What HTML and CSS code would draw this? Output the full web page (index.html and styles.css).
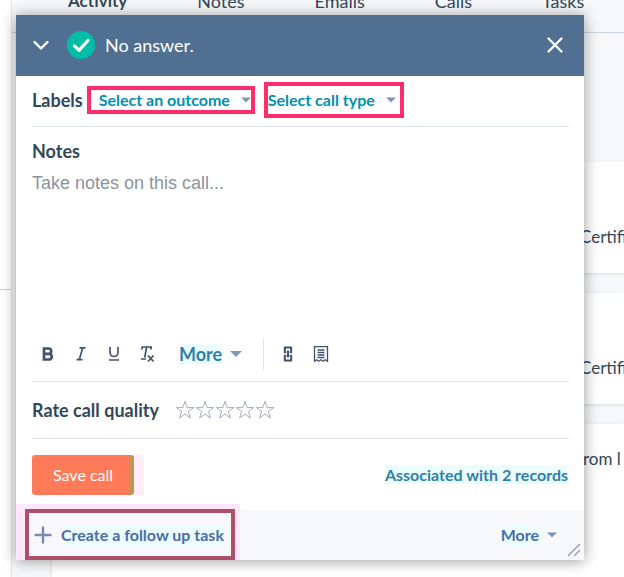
FILE: index.html
```html
<!DOCTYPE html>
<html lang="en">
<head>
    <meta charset="utf-8">
    <title>Log call</title>
    <link rel="stylesheet" href="styles.css">
</head>
<body>
    <div class="page">
        <aside class="sidebar">
            <div class="sidebar-section"></div>
        </aside>
        <main class="record">
            <nav class="tabs">
                <a href="#activity" class="tab active">Activity</a>
                <a href="#notes" class="tab">Notes</a>
                <a href="#emails" class="tab">Emails</a>
                <a href="#calls" class="tab">Calls</a>
                <a href="#tasks" class="tab">Tasks</a>
            </nav>
            <div class="feed">
                <div class="card">Certifi</div>
                <div class="card">Certifi</div>
                <div class="card card-last">from l</div>
            </div>
        </main>
    </div>

    <section class="dialog" role="dialog" aria-labelledby="call-status">
        <header class="dialog-header">
            <button class="icon-button" type="button" aria-label="Minimize">
                <svg width="18" height="18" viewBox="0 0 18 18"><path d="M2.500 6l6.500 6.500 6.500-6.500" fill="none" stroke="#fff" stroke-width="2.400" stroke-linecap="round" stroke-linejoin="round"/></svg>
            </button>
            <svg class="status-icon" width="28" height="28" viewBox="0 0 28 28"><circle cx="14" cy="14" r="14" fill="#00bda5"/><path d="M7.500 15l4.500 4.300 9-9.800" fill="none" stroke="#fff" stroke-width="3.200" stroke-linecap="round" stroke-linejoin="round"/></svg>
            <span class="status" id="call-status">No answer.</span>
            <button class="icon-button" type="button" aria-label="Close">
                <svg width="18" height="18" viewBox="0 0 18 18"><path d="M2.500 2.500l13 13M15.500 2.500l-13 13" fill="none" stroke="#fff" stroke-width="2.300" stroke-linecap="round"/></svg>
            </button>
        </header>

        <form class="dialog-form">
            <div class="labels">
                <span class="heading">Labels</span>
                <label class="picker picker-outcome">
                    <select class="picker-select" aria-label="Call outcome">
                        <option>Select an outcome</option>
                    </select>
                    <svg class="caret" width="10" height="6" viewBox="0 0 10 6"><path d="M0 .5h10L5 5.500z"/></svg>
                </label>
                <label class="picker picker-type">
                    <select class="picker-select" aria-label="Call type">
                        <option>Select call type</option>
                    </select>
                    <svg class="caret" width="10" height="6" viewBox="0 0 10 6"><path d="M0 .5h10L5 5.500z"/></svg>
                </label>
            </div>

            <div class="notes">
                <label class="heading" for="notes">Notes</label>
                <textarea class="notes-input" id="notes" placeholder="Take notes on this call..."></textarea>
                <div class="toolbar">
                    <button class="tool" type="button" aria-label="Bold">
                        <svg width="18" height="18" viewBox="0 0 18 18"><path d="M5 3.500h4.500a2.700 2.700 0 0 1 0 5.400H5zM5 8.900h5a2.800 2.800 0 0 1 0 5.600H5z" stroke-width="2.700"/></svg>
                    </button>
                    <button class="tool" type="button" aria-label="Italic">
                        <svg width="18" height="18" viewBox="0 0 18 18"><path d="M7.500 2.800h6M4.500 14.700h6M10.700 3L7.300 14.500"/></svg>
                    </button>
                    <button class="tool" type="button" aria-label="Underline">
                        <svg width="18" height="18" viewBox="0 0 18 18"><path d="M5 2v5.500a4 4 0 0 0 8 0V2M4 15h10"/></svg>
                    </button>
                    <button class="tool" type="button" aria-label="Clear formatting">
                        <svg width="18" height="18" viewBox="0 0 18 18"><path d="M3.700 4.500l.5-2.500h9l-.5 2.500M8.700 2L6.700 12.500M3 14h5M10 10.500l5.500 6M15.500 10.500l-5.500 6"/></svg>
                    </button>
                    <button class="menu-button menu-format" type="button" aria-haspopup="true">
                        <span class="mark">More</span>
                        <svg class="caret" width="12" height="6" viewBox="0 0 12 6"><path d="M0 0h12L6 6z"/></svg>
                    </button>
                    <button class="tool" type="button" aria-label="Link">
                        <svg width="18" height="18" viewBox="0 0 18 18"><path d="M7.300 7.300H5.800V2.500h6.400v4.800h-1.500M7.300 10.700H5.800v4.800h6.400v-4.800h-1.500M9 5.500v7" stroke-width="2" stroke-linejoin="round"/></svg>
                    </button>
                    <button class="tool" type="button" aria-label="Snippet">
                        <svg width="18" height="18" viewBox="0 0 18 18"><path d="M2.500 1.700h13v14.500l-2.200-1.500-2.100 1.500L9 14.700l-2.200 1.500-2.100-1.500-2.200 1.500zM5.500 5h7M5.500 7.500h7M5.500 10h7M5.500 12.500h7" stroke-width="1.300"/></svg>
                    </button>
                </div>
            </div>

            <div class="rating">
                <span class="heading">Rate call quality</span>
                <div class="stars">
                    <label class="star"><input type="radio" name="quality" value="1" aria-label="1 star"><svg width="20" height="20" viewBox="0 0 20 20"><path d="M10 1.300l2.100 6.300h6.600l-5.300 3.900 2 6.500-5.400-4-5.400 4 2-6.500-5.300-3.900h6.600z"/></svg></label>
                    <label class="star"><input type="radio" name="quality" value="2" aria-label="2 stars"><svg width="20" height="20" viewBox="0 0 20 20"><path d="M10 1.300l2.100 6.300h6.600l-5.300 3.900 2 6.500-5.400-4-5.400 4 2-6.500-5.300-3.900h6.600z"/></svg></label>
                    <label class="star"><input type="radio" name="quality" value="3" aria-label="3 stars"><svg width="20" height="20" viewBox="0 0 20 20"><path d="M10 1.300l2.100 6.300h6.600l-5.300 3.900 2 6.500-5.400-4-5.400 4 2-6.500-5.300-3.900h6.600z"/></svg></label>
                    <label class="star"><input type="radio" name="quality" value="4" aria-label="4 stars"><svg width="20" height="20" viewBox="0 0 20 20"><path d="M10 1.300l2.100 6.300h6.600l-5.300 3.900 2 6.500-5.400-4-5.400 4 2-6.500-5.300-3.900h6.600z"/></svg></label>
                    <label class="star"><input type="radio" name="quality" value="5" aria-label="5 stars"><svg width="20" height="20" viewBox="0 0 20 20"><path d="M10 1.300l2.100 6.300h6.600l-5.300 3.900 2 6.500-5.400-4-5.400 4 2-6.500-5.300-3.900h6.600z"/></svg></label>
                </div>
            </div>

            <div class="actions">
                <button class="save" type="submit">Save call</button>
                <a href="#records" class="associated"><span class="mark">Associated with 2 records</span></a>
            </div>
        </form>

        <footer class="dialog-footer">
            <div class="follow-up">
                <button class="follow-up-button" type="button">
                    <svg width="18" height="18" viewBox="0 0 18 18"><path d="M9 1.500v15M1.500 9h15" fill="none" stroke="#7c89b0" stroke-width="2.400" stroke-linecap="round"/></svg>
                    <span class="mark">Create a follow up task</span>
                </button>
            </div>
            <button class="menu-button" type="button" aria-haspopup="true">
                <span class="mark">More</span>
                <svg class="caret" width="10" height="6" viewBox="0 0 10 6"><path d="M0 .5h10L5 5.500z"/></svg>
            </button>
        </footer>
        <svg class="resize" width="14" height="14" viewBox="0 0 14 14"><path d="M1.500 12.500l11-11M7.500 12.500l5-5" fill="none" stroke="#8d94b0" stroke-width="1.200" stroke-linecap="round"/></svg>
    </section>
</body>
</html>
```
FILE: styles.css
```css
* {
    box-sizing: border-box;
}

body {
    margin: 0;
    overflow: hidden;
    font-family: Lato, "Open Sans", sans-serif;
    font-size: 16px;
    line-height: 20px;
    color: #33475b;
}

button,
select,
textarea {
    margin: 0;
    padding: 0;
    border: 0;
    background: none;
    font: inherit;
    color: inherit;
}

button {
    cursor: pointer;
}

a {
    color: inherit;
    text-decoration: none;
}

svg {
    display: block;
    flex: none;
}

/* record page behind the dialog */
.page {
    display: flex;
    min-height: 100vh;
}

.sidebar {
    width: 12px;
    border-right: 1px solid #dfe3eb;
    background: #fff;
}

.sidebar-section {
    height: 290px;
    border-bottom: 1px solid #cbd6e2;
}

.record {
    display: flex;
    flex: 1;
    flex-direction: column;
    min-width: 0;
    background: #f6f8fa;
}

.tabs {
    display: flex;
    gap: 70px;
    margin-top: -9px;
    padding: 0 0 21px 56px;
    border-bottom: 1px solid #cbd6e2;
    font-size: 18px;
}

.tab.active {
    font-size: 17px;
    font-weight: 700;
}

.feed {
    display: flex;
    flex: 1;
    flex-direction: column;
    gap: 20px;
    padding: 129px 0 0 40px;
}

.card {
    height: 111px;
    padding: 65px 0 0 528px;
    background: #fff;
    box-shadow: 0 1px 3px rgba(45, 62, 80, 0.15);
    font-size: 17px;
    white-space: nowrap;
}

.card-last {
    flex: 1;
    padding: 25px 0 0 525px;
}

/* call dialog */
.dialog {
    position: absolute;
    top: 15px;
    right: 40px;
    bottom: 17px;
    left: 16px;
    display: flex;
    flex-direction: column;
    background: #fff;
    box-shadow: 0 1px 14px rgba(0, 0, 0, 0.4);
}

.dialog-header {
    display: flex;
    align-items: center;
    height: 61px;
    padding: 0 20px 2px 16px;
    background: #516f90;
    color: #fff;
}

.status-icon {
    margin-left: 17px;
}

.status {
    flex: 1;
    margin-left: 10px;
    font-size: 18px;
}

.dialog-form {
    display: flex;
    flex: 1;
    flex-direction: column;
    padding: 0 15px 0 16px;
}

.heading {
    font-size: 18px;
    font-weight: 700;
}

.labels {
    display: flex;
    align-items: center;
    height: 51px;
    padding-bottom: 2px;
    border-bottom: 1px solid #dfe3eb;
}

.picker {
    display: flex;
    align-items: center;
    border: 4px solid #ff2d6b;
    font-weight: 700;
    color: #0091ae;
}

.picker-select {
    appearance: none;
    cursor: pointer;
}

.picker-outcome {
    gap: 10px;
    height: 28px;
    margin-left: 4px;
    padding-left: 8px;
}

.picker-type {
    gap: 10px;
    height: 36px;
    margin-left: 9px;
    padding-right: 4px;
}

.caret {
    fill: #7c98b6;
}

.notes {
    display: flex;
    flex: 1;
    flex-direction: column;
    padding-top: 14px;
    border-bottom: 1px solid #dfe3eb;
}

.notes-input {
    flex: 1;
    margin-top: 12px;
    outline: 0;
    resize: none;
    font-family: "Liberation Sans", Arial, sans-serif;
    font-size: 18px;
}

.notes-input::placeholder {
    color: #8b93a1;
    opacity: 1;
}

.toolbar {
    display: flex;
    align-items: center;
    gap: 15px;
    height: 32px;
    margin-bottom: 11px;
    padding-left: 7px;
}

.tool svg {
    fill: none;
    stroke: #45506e;
    stroke-width: 1.7;
}

.menu-button {
    display: flex;
    align-items: center;
    gap: 8px;
    font-weight: 700;
    color: #4a6da5;
}

.menu-format {
    height: 32px;
    margin-left: 8px;
    padding-right: 21px;
    border-right: 1px solid #dfe3eb;
    font-size: 18px;
    color: #2f7fa8;
}

.mark {
    background: #ebfdff;
}

.rating {
    display: flex;
    align-items: center;
    gap: 16px;
    height: 57px;
    border-bottom: 1px solid #dfe3eb;
}

.stars {
    display: flex;
}

.star {
    position: relative;
    cursor: pointer;
}

.star input {
    position: absolute;
    inset: 0;
    margin: 0;
    opacity: 0;
}

.star svg {
    fill: none;
    stroke: #a3abc4;
}

.actions {
    display: flex;
    align-items: center;
    justify-content: space-between;
    height: 71px;
    padding-right: 1px;
}

.save {
    height: 40px;
    padding: 0 16px 0 21px;
    border-right: 5px solid #bf9656;
    border-radius: 3px;
    background: #ff7a59;
    box-shadow: 10px 0 #ffecfb;
    color: #fff;
}

.associated {
    font-weight: 700;
    color: #2f7fa8;
}

.dialog-footer {
    display: flex;
    align-items: center;
    justify-content: space-between;
    height: 50px;
    padding-right: 27px;
    background: #f6f8fa;
}

.follow-up {
    margin-top: -6px;
    padding: 5px 5px 0 9px;
    background: #ffe6fa;
}

.follow-up-button {
    display: flex;
    align-items: center;
    gap: 9px;
    height: 51px;
    padding: 0 7px 0 5px;
    border: 4px solid #ad4e6a;
    background: #f8f7fc;
    font-weight: 700;
    color: #4a6da5;
}

.resize {
    position: absolute;
    right: 3px;
    bottom: 3px;
}
```
